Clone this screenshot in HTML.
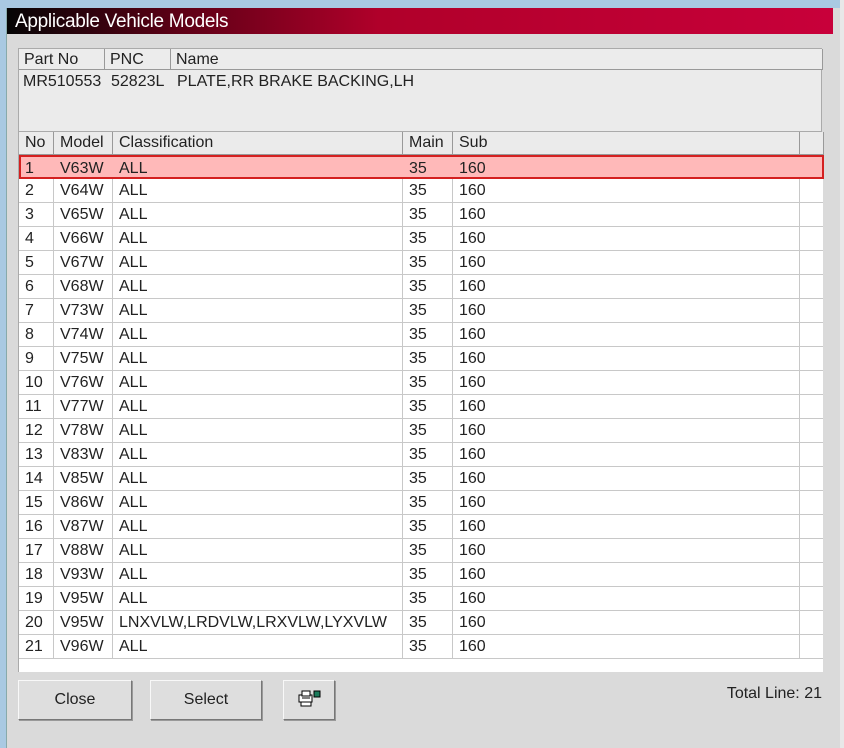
<!DOCTYPE html>
<html><head><meta charset="utf-8"><style>
*{margin:0;padding:0;box-sizing:border-box}
body{width:844px;height:748px;overflow:hidden;background:#a9c9e2;font-family:"Liberation Sans",sans-serif;font-size:16px;color:#222;position:relative}
.side{position:absolute;left:840px;top:0;width:4px;height:748px;background:#e8e8e8}
.win{position:absolute;left:6px;top:8px;width:834px;height:740px;background:#dadada;border-left:1px solid #8aa;}
.title{position:absolute;left:0;top:0;width:826px;height:26px;background:linear-gradient(90deg,#050505 0%,#5a0015 20%,#b0002a 45%,#c8003a 100%);color:#fff;font-size:19px;padding:3px 0 0 8px;letter-spacing:-0.3px}
.info{position:absolute;left:11px;top:40px;width:804px;height:84px;background:#ebebeb;border:1px solid #aaa}
.ih{position:absolute;top:0;height:21px;border-right:1px solid #999;border-bottom:1px solid #999;padding:2px 0 0 5px;background:#ececec}
.iv{position:absolute;top:24px;}
.grid{position:absolute;left:11px;top:124px;width:805px;height:540px;background:#fff;border-left:1px solid #aaa}
.hd{position:absolute;top:0;height:23px;border-right:1px solid #999;border-bottom:1px solid #999;padding:2px 0 0 6px;background:#ebebeb}
.row{position:absolute;left:0;width:804px;height:24px;border-bottom:1px solid #c8c8c8}
.row span{position:absolute;top:3px}
.vl{position:absolute;top:23px;width:1px;background:#c8c8c8;height:504px}
.sel{background:#ffb9b9;border:2px solid #d42020}
.btn{position:absolute;top:672px;height:40px;background:#dedede;border:1px solid;border-color:#f8f8f8 #777 #777 #f8f8f8;box-shadow:1px 1px 0 #999;text-align:center;padding-top:10px;font-size:16px}
.tot{position:absolute;right:18px;top:677px;font-size:16px}
</style></head><body>
<div class="side"></div>
<div class="win">
<div class="title">Applicable Vehicle Models</div>
<div class="info">
<div class="ih" style="left:0;width:86px">Part No</div>
<div class="ih" style="left:86px;width:66px">PNC</div>
<div class="ih" style="left:152px;width:652px">Name</div>
<div class="iv" style="left:4px">MR510553</div>
<div class="iv" style="left:92px">52823L</div>
<div class="iv" style="left:158px">PLATE,RR BRAKE BACKING,LH</div>
</div>
<div class="grid">
<div class="hd" style="left:0;width:35px">No</div>
<div class="hd" style="left:35px;width:59px">Model</div>
<div class="hd" style="left:94px;width:290px">Classification</div>
<div class="hd" style="left:384px;width:50px">Main</div>
<div class="hd" style="left:434px;width:347px">Sub</div>
<div class="hd" style="left:781px;width:24px"></div>
<div class="vl" style="left:34px"></div><div class="vl" style="left:93px"></div><div class="vl" style="left:383px"></div><div class="vl" style="left:433px"></div><div class="vl" style="left:780px"></div>
<div id="rows"></div>
</div>
<div class="btn" style="left:11px;width:114px">Close</div>
<div class="btn" style="left:143px;width:112px">Select</div>
<div class="btn" style="left:276px;width:52px;padding-top:8px"><svg width="26" height="20" viewBox="0 0 26 20"><rect x="3" y="6" width="13" height="7" fill="#fff" stroke="#000"/><rect x="6" y="2" width="8" height="5" fill="#fff" stroke="#000"/><rect x="5" y="13" width="10" height="4" fill="#fff" stroke="#000"/><line x1="6" y1="9" x2="14" y2="9" stroke="#000"/><rect x="18" y="2" width="6" height="6" fill="#1a7a5a" stroke="#000"/></svg></div>
<div class="tot">Total Line: 21</div>
</div>
<script>
var m=["V63W","V64W","V65W","V66W","V67W","V68W","V73W","V74W","V75W","V76W","V77W","V78W","V83W","V85W","V86W","V87W","V88W","V93W","V95W","V95W","V96W"];
var h="";for(var i=0;i<21;i++){var c=i==19?"LNXVLW,LRDVLW,LRXVLW,LYXVLW":"ALL";
h+='<div class="row'+(i==0?' sel':'')+'" style="top:'+(23+i*24)+'px'+(i==0?';left:0;width:805px':'')+'"><span style="left:'+(i==0?4:6)+'px">'+(i+1)+'</span><span style="left:'+(i==0?39:41)+'px">'+m[i]+'</span><span style="left:'+(i==0?98:100)+'px">'+c+'</span><span style="left:'+(i==0?388:390)+'px">35</span><span style="left:'+(i==0?438:440)+'px">160</span></div>';}
document.getElementById("rows").innerHTML=h;
</script>
</body></html>
